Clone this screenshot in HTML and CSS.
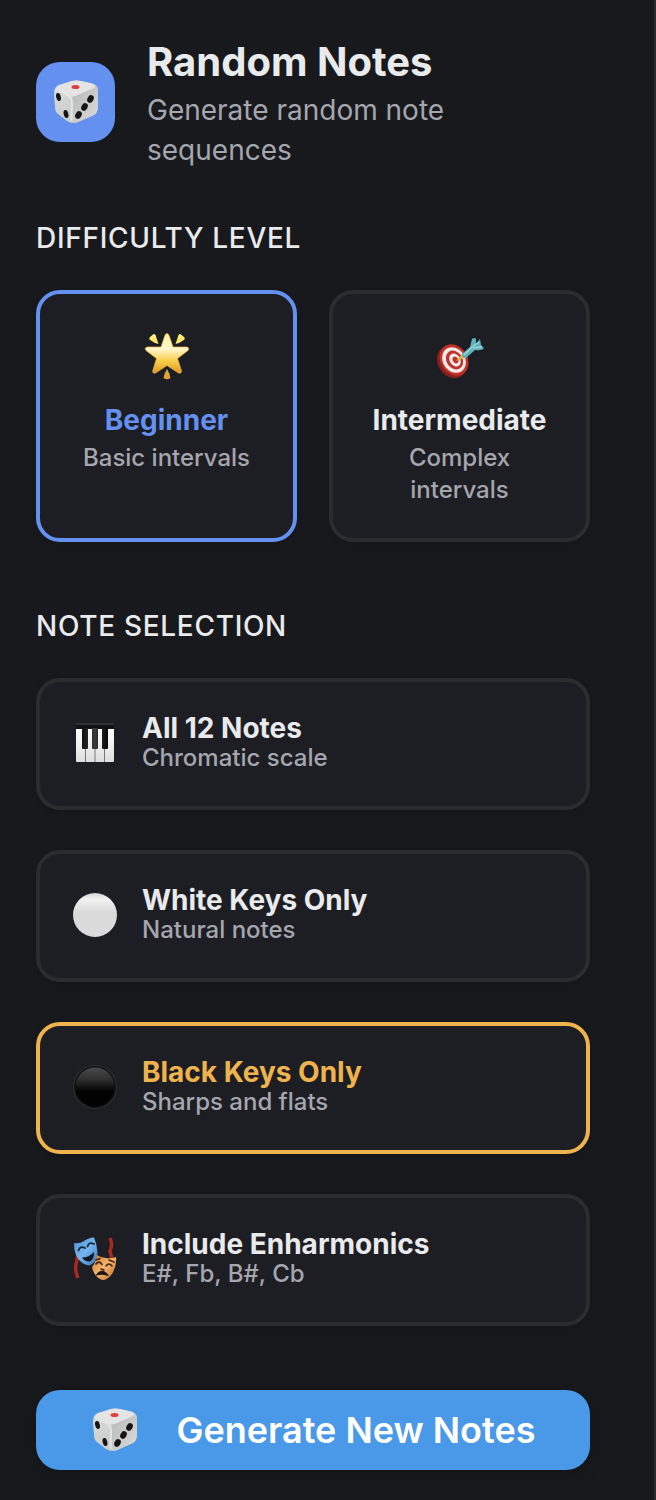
FILE: index.html
```html
<!DOCTYPE html>
<html lang="en">
<head>
<meta charset="utf-8">
<meta name="viewport" content="width=device-width, initial-scale=1">
<title>Random Notes</title>
<link rel="stylesheet" href="styles.css">
</head>
<body>
<svg class="defs" aria-hidden="true">
  <defs>
    <linearGradient id="dieLeft" x1="0" y1="0" x2="1" y2="1"><stop offset="0" stop-color="#dcdddd"/><stop offset="1" stop-color="#c0c1c1"/></linearGradient>
    <linearGradient id="dieRight" x1="0" y1="0" x2="1" y2="1"><stop offset="0" stop-color="#b4b6b5"/><stop offset="1" stop-color="#dcdddc"/></linearGradient>
    <linearGradient id="starFill" x1="0" y1="0" x2="0" y2="1"><stop offset="0" stop-color="#fff0a0"/><stop offset=".38" stop-color="#fff8cf"/><stop offset=".68" stop-color="#f9cf4d"/><stop offset="1" stop-color="#e19522"/></linearGradient>
    <linearGradient id="ray" x1="0" y1="0" x2="0" y2="1"><stop offset="0" stop-color="#fff07a"/><stop offset="1" stop-color="#dc9c2c"/></linearGradient>
    <linearGradient id="whiteBall" x1="0" y1="0" x2="0" y2="1"><stop offset="0" stop-color="#d2d2d2"/><stop offset=".14" stop-color="#f2f2f2"/><stop offset=".45" stop-color="#d9d9d9"/><stop offset="1" stop-color="#dcdcdc"/></linearGradient>
    <linearGradient id="blackBall" x1="0" y1="0" x2="0" y2="1"><stop offset="0" stop-color="#4a4a4a"/><stop offset=".3" stop-color="#303030"/><stop offset=".6" stop-color="#030303"/><stop offset="1" stop-color="#000"/></linearGradient>
    <linearGradient id="keys" x1="0" y1="0" x2="0" y2="1"><stop offset="0" stop-color="#fff"/><stop offset="1" stop-color="#dedede"/></linearGradient>
    <linearGradient id="blackKey" x1="0" y1="0" x2="1" y2="0"><stop offset="0" stop-color="#111"/><stop offset=".5" stop-color="#3a3a3a"/><stop offset="1" stop-color="#080808"/></linearGradient>
    <linearGradient id="blueMask" x1="0" y1="0" x2="1" y2="1"><stop offset="0" stop-color="#4b8fd0"/><stop offset=".5" stop-color="#75b5ef"/><stop offset="1" stop-color="#3476bd"/></linearGradient>
    <linearGradient id="goldMask" x1="0" y1="0" x2="1" y2="1"><stop offset="0" stop-color="#c9772f"/><stop offset=".5" stop-color="#f6b66d"/><stop offset="1" stop-color="#b9662b"/></linearGradient>
    <symbol id="die" viewBox="0 0 48 48">
      <path d="M20 3Q24 2 29 3L40 5.500Q46 7 46 12V29Q46 34 42 37L26 44Q20 46.500 15 43L6 36Q3 34 3 29L2 15Q2 9 7 7Z" fill="url(#dieLeft)"/>
      <path d="M20 22Q20 18 25 16L41 9Q46 8 46 13V29Q46 34 42 37L26 44Q22 46 19 44Z" fill="url(#dieRight)"/>
      <path d="M20 3Q24 2 29 3L40 5.500Q46 8 41 10.500L26 17Q20 20 14 16L5 11Q3 8.500 8 7Z" fill="#e3e4e3"/>
      <path d="M4 11L14 16.500Q20 19 20 24L19.500 43" fill="none" stroke="#e4e5e4" stroke-width="2" stroke-linejoin="round"/>
      <ellipse cx="23.500" cy="9" rx="4" ry="2" fill="#dc3f3d"/>
      <g fill="#151515"><ellipse cx="6.500" cy="19" rx="2.300" ry="4" transform="rotate(-14 6.500 19)"/><ellipse cx="14" cy="36" rx="2.300" ry="4" transform="rotate(-14 14 36)"/><ellipse cx="38.500" cy="21" rx="3" ry="4" transform="rotate(30 38.500 21)"/><ellipse cx="32.500" cy="29" rx="3" ry="4" transform="rotate(30 32.500 29)"/><ellipse cx="26.500" cy="37" rx="3" ry="4" transform="rotate(30 26.500 37)"/></g>
    </symbol>
  </defs>
</svg>
<main class="panel">
  <header class="header">
    <span class="logo"><svg class="icon" aria-hidden="true"><use href="#die"/></svg></span>
    <div class="intro">
      <h1 class="title">Random Notes</h1>
      <p class="subtitle">Generate random note sequences</p>
    </div>
  </header>

  <section class="section" aria-labelledby="levels">
    <h2 class="heading" id="levels">DIFFICULTY LEVEL</h2>
    <div class="levels">
      <button class="card level level-on" type="button" aria-pressed="true">
        <svg class="icon level-icon" viewBox="0 0 48 48" aria-hidden="true">
          <path d="M24 1.500Q25.500 1.500 26.300 4L30 15H44Q47 16 45 18.500L34.500 26.500L38.500 39Q38.500 42 35.500 41L24 33.500L12.500 41Q9.500 42 9.700 39L13.500 26.500L3 18.500Q1 16 4 15H18L21.700 4Q22.500 1.500 24 1.500Z" fill="url(#starFill)" stroke="#e9b43e" stroke-width=".7"/>
          <path d="M10 2.500Q11.500 1.500 12.500 3L15.500 12Q12 11.500 6.500 7.500Q6 6 7 5ZM38 2.500Q36.500 1.500 35.500 3L32.500 12Q36 11.500 41.500 7.500Q42 6 41 5ZM24 37Q27 42 27.500 46Q24 48.500 20.500 46Q21 42 24 37Z" fill="url(#ray)"/>
        </svg>
        <span class="name">Beginner</span>
        <span class="note">Basic intervals</span>
      </button>
      <button class="card level" type="button" aria-pressed="false">
        <svg class="icon level-icon" viewBox="0 -4 48 48" aria-hidden="true">
          <ellipse cx="16" cy="26" rx="14" ry="17" transform="rotate(-34 16 26)" fill="#85201d"/>
          <ellipse cx="18" cy="24" rx="13.500" ry="16.500" transform="rotate(-34 18 24)" fill="#c2302a"/>
          <ellipse cx="18" cy="24" rx="11" ry="13.500" transform="rotate(-34 18 24)" fill="#f2eae6"/>
          <ellipse cx="18.500" cy="24" rx="8" ry="10" transform="rotate(-34 18.500 24)" fill="#bd322c"/>
          <ellipse cx="19" cy="24" rx="5.200" ry="7" transform="rotate(-34 19 24)" fill="#f2eae6"/>
          <ellipse cx="19.500" cy="24" rx="2.600" ry="3.500" transform="rotate(-34 19.500 24)" fill="#bd322c"/>
          <path d="M20 25L26 18L29 22Z" fill="#d9b13d"/>
          <path d="M26 18L34 11L36 3Q39 1 40 3L40 8L44 3L45 9L48 12Q46 15 39 14L30 22Q27 23 26 18Z" fill="#5fb0b8"/>
          <path d="M28 19L36 11L43 6M37 12L46 11" fill="none" stroke="#9ad8da" stroke-width="1.500"/>
        </svg>
        <span class="name">Intermediate</span>
        <span class="note">Complex intervals</span>
      </button>
    </div>
  </section>

  <section class="section" aria-labelledby="selection">
    <h2 class="heading" id="selection">NOTE SELECTION</h2>
    <div class="options">
      <button class="card option" type="button" aria-pressed="false">
        <svg class="icon" viewBox="0 0 48 48" aria-hidden="true">
          <path d="M5 3H43V10H5Z" fill="#101113"/><path d="M5 4H43" stroke="#3d3e40" stroke-width="1.500"/>
          <path d="M5 9H43V41Q43 42 42 42H6Q5 42 5 41Z" fill="url(#keys)"/>
          <path d="M14.500 28V42M24 28V42M33.500 28V42" stroke="#777" stroke-width="1"/>
          <path d="M11 8H17V28Q17 29 16 29H12Q11 29 11 28ZM21 8H27V28Q27 29 26 29H22Q21 29 21 28ZM31 8H37V28Q37 29 36 29H32Q31 29 31 28Z" fill="url(#blackKey)"/>
        </svg>
        <span class="copy"><span class="name">All 12 Notes</span><span class="note">Chromatic scale</span></span>
      </button>
      <button class="card option" type="button" aria-pressed="false">
        <svg class="icon" viewBox="0 0 48 48" aria-hidden="true"><circle cx="24" cy="23" r="22" fill="url(#whiteBall)"/></svg>
        <span class="copy"><span class="name">White Keys Only</span><span class="note">Natural notes</span></span>
      </button>
      <button class="card option option-on" type="button" aria-pressed="true">
        <svg class="icon" viewBox="0 0 48 48" aria-hidden="true"><circle cx="24" cy="23" r="22" fill="#303133"/><circle cx="24" cy="23" r="21" fill="#111"/><circle cx="24" cy="23" r="19.500" fill="url(#blackBall)"/></svg>
        <span class="copy"><span class="name">Black Keys Only</span><span class="note">Sharps and flats</span></span>
      </button>
      <button class="card option" type="button" aria-pressed="false">
        <svg class="icon" viewBox="0 0 48 48" aria-hidden="true">
          <path d="M5 12Q8 20 5 28Q4 36 7 42" fill="none" stroke="#a92820" stroke-width="3.500"/>
          <path d="M39 2Q42 9 39 15L41 23" fill="none" stroke="#a92820" stroke-width="3.500"/>
          <path d="M3 7Q8 8 13 5Q19 1 23 1.500Q26 8 26.500 16Q26 27 18 29.500Q10 28 6 21Q3 15 3 7Z" fill="url(#blueMask)"/>
          <path d="M7.500 14.500Q9 9.500 14 12M16.500 10.500Q18 5.500 23 8" fill="none" stroke="#14273f" stroke-width="1.800" stroke-linecap="round"/>
          <path d="M11 21.500Q18 21.500 23 16Q23.500 23 19 25.500Q14 26 11 21.500Z" fill="#101824"/>
          <path d="M26 19Q30 22 35 22Q40 23 45 21Q46 30 41 38Q36 44.500 31 44Q23 41 21 31Q24 28 26 19Z" fill="url(#goldMask)"/>
          <path d="M25 28Q28 24 31 28.500M35 30Q38 26 41 30M25 24L29 22.500M38 24L43 26M30 33L33 34" fill="none" stroke="#402413" stroke-width="1.600" stroke-linecap="round"/>
          <path d="M25.500 39Q31 31.500 37 39.500Q31 37 25.500 39Z" fill="#201812" stroke="#201812" stroke-width="1.200" stroke-linejoin="round"/>
        </svg>
        <span class="copy"><span class="name">Include Enharmonics</span><span class="note">E#, Fb, B#, Cb</span></span>
      </button>
    </div>
  </section>

  <button class="generate" type="button"><svg class="icon" aria-hidden="true"><use href="#die"/></svg><span>Generate New Notes</span></button>
</main>
</body>
</html>
```
FILE: styles.css
```css
* { box-sizing: border-box; }
body { margin: 0; background: #18191d; color: #e9eaec; font-family: Inter, "Liberation Sans", sans-serif; }
button { font: inherit; color: inherit; cursor: pointer; }
h1, h2, p { margin: 0; }
.defs { position: absolute; width: 0; height: 0; }
.panel { min-height: 100vh; padding: 34px 64px 30px 36px; border-right: 2px solid #2a2c30; }
.header { display: flex; align-items: center; gap: 32px; margin-bottom: 48px; }
.logo { display: flex; align-items: center; justify-content: center; flex: none; width: 79px; height: 80px; border-radius: 24px; background: #6490f0; }
.icon { display: block; flex: none; width: 48px; height: 48px; }
.title { font-size: 40px; line-height: 56px; font-weight: 700; }
.subtitle { max-width: 340px; font-size: 28px; line-height: 40px; color: #a5a6ae; }
.section { margin-bottom: 64px; }
.heading { margin-bottom: 32px; font-size: 28px; line-height: 40px; font-weight: 500; letter-spacing: 0.025em; }
.levels { display: grid; grid-template-columns: 1fr 1fr; gap: 32px; }
.card { border: 4px solid #2a2c30; border-radius: 24px; background: #1d1e23; box-shadow: 0 2px 6px rgba(0, 0, 0, .15); }
.level { display: flex; flex-direction: column; align-items: center; padding: 38px 32px 32px; text-align: center; }
.level-icon { margin-bottom: 20px; }
.name { font-size: 28px; line-height: 28px; font-weight: 700; }
.note { font-size: 24px; line-height: 32px; font-weight: 500; color: #a5a6ae; }
.level .name { margin-bottom: 2px; line-height: 40px; }
.level-on { border-color: #6490f0; }
.level-on .name { color: #6490f0; }
.options { display: grid; gap: 40px; }
.option { display: flex; align-items: center; gap: 23px; width: 100%; padding: 32px 31px; text-align: left; }
.copy { display: flex; flex-direction: column; }
.option-on { border-color: #efb34e; }
.option-on .name { color: #efb34e; }
.generate { display: flex; align-items: center; justify-content: center; gap: 38px; width: 100%; height: 80px; padding: 0; border: 0; border-radius: 24px; background: #4a99e9; color: #fff; font-size: 36px; line-height: 48px; font-weight: 600; box-shadow: 0 4px 16px rgba(0, 0, 0, .2); }
```
